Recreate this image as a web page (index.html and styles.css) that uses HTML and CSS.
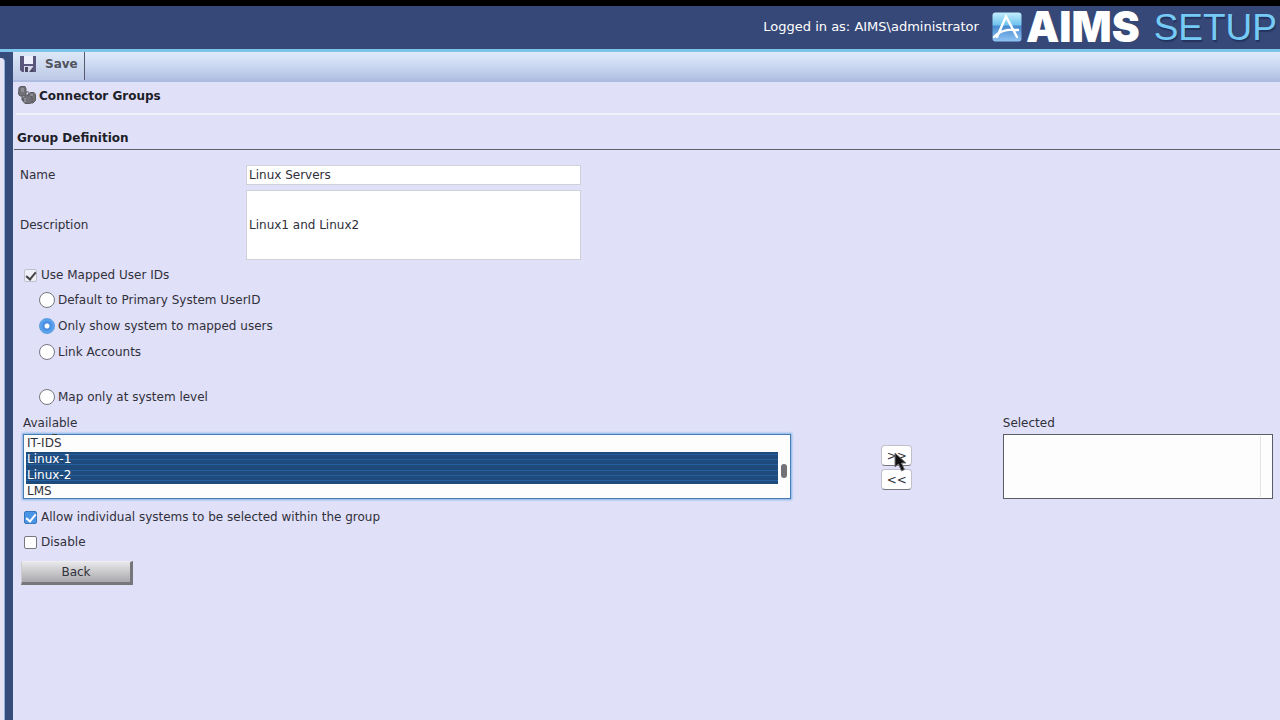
FILE: index.html
```html
<!DOCTYPE html>
<html lang="en">
<head>
<meta charset="utf-8">
<title>AIMS Setup</title>
<link rel="stylesheet" href="styles.css">
</head>
<body>
<header class="banner">
  <span class="login">Logged in as: AIMS\administrator</span>
  <svg class="logo" viewBox="0 0 30 30" aria-hidden="true">
    <defs><linearGradient id="lg" x1="0" y1="0" x2="0" y2="1"><stop offset="0" stop-color="#c3edfc"/><stop offset=".42" stop-color="#71c3ef"/><stop offset=".48" stop-color="#4a8ad0"/><stop offset="1" stop-color="#8fc5f5"/></linearGradient></defs>
    <rect x=".5" y=".5" width="29" height="29" rx="3" fill="url(#lg)"/>
    <path d="M5 25 L14 4.500 L25 25 M2 25 Q10 16 26 18" fill="none" stroke="#fff" stroke-width="2.400" stroke-linecap="round"/>
  </svg>
  <span class="brand">AIMS</span>
  <span class="product">SETUP</span>
</header>
<div class="shell">
  <aside class="rail"><div class="rail-panel"></div></aside>
  <main class="content">
    <div class="toolbar">
      <button class="save" type="button">
        <svg class="save-icon" viewBox="0 0 16 16" aria-hidden="true"><path d="M0 0h16v16H2l-2-2z" fill="#5a567c"/><path d="M4 0h9v8H4z" fill="#eef0fb"/><path d="M4 10h9v6H4z" fill="#d5d8e8"/><path d="M5 11h3v5H5zM9 16l4-5v5z" fill="#4b4865"/></svg>
        Save
      </button>
    </div>
    <h1 class="title">
      <svg class="group-icon" viewBox="0 0 18 19" aria-hidden="true"><g fill="#707076" stroke="#5a5a60"><path d="M1 1.500l2-1h4l1 2v6l-2 1.500H2L.5 8z"/><path d="M10.500 7.500l2-1H16l1.500 2v6L15 17H11l-1-2z"/><path d="M4 10v4h4M8 6h3M4 14l3 3.500h5l2-2V11l-3-2H8z"/></g><path d="M3 3h3M3 5h3M12 9h3M7 12v4" stroke="#a9a9b4" fill="none"/></svg>
      Connector Groups
    </h1>
    <h2 class="section">Group Definition</h2>
    <form class="form">
      <div class="field"><label for="name">Name</label><input class="text" id="name" value="Linux Servers"></div>
      <div class="field"><label for="desc">Description</label><input class="text tall" id="desc" value="Linux1 and Linux2"></div>
      <label class="check first"><input type="checkbox" class="box pale" checked>Use Mapped User IDs</label>
      <div class="radios">
        <label class="check"><input type="radio" class="dot" name="map">Default to Primary System UserID</label>
        <label class="check"><input type="radio" class="dot" name="map" checked>Only show system to mapped users</label>
        <label class="check"><input type="radio" class="dot" name="map">Link Accounts</label>
        <label class="check apart"><input type="radio" class="dot" name="map">Map only at system level</label>
      </div>
      <div class="lists">
        <div class="list-col">
          <label for="avail">Available</label>
          <div class="list-wrap">
            <select class="list active" id="avail" multiple size="4">
              <option>IT-IDS</option><option selected>Linux-1</option><option selected>Linux-2</option><option>LMS</option>
            </select>
          </div>
        </div>
        <div class="movers">
          <button class="move" type="button">&gt;&gt;</button>
          <button class="move" type="button">&lt;&lt;</button>
          <svg class="cursor" viewBox="0 0 14 20" aria-hidden="true"><path d="M1 1v14l3.500-3 3 7 3-1.500-3-6.500H12z" fill="#111" stroke="#777"/></svg>
        </div>
        <div class="list-col">
          <label for="chosen">Selected</label>
          <div class="chosen-wrap"><select class="list" id="chosen" multiple size="4"></select></div>
        </div>
      </div>
      <label class="check allow"><input type="checkbox" class="box blue" checked>Allow individual systems to be selected within the group</label>
      <label class="check"><input type="checkbox" class="box">Disable</label>
      <button class="back" type="button">Back</button>
    </form>
  </main>
</div>
</body>
</html>
```
FILE: styles.css
```css
* { box-sizing: border-box; }
body {
  margin: 0;
  min-height: 100vh;
  display: flex;
  flex-direction: column;
  background: #e0e0f8;
  color: #30303a;
  font: 12px/16px Verdana, "DejaVu Sans", sans-serif;
}
button, input, select { font: inherit; color: inherit; margin: 0; }
.banner {
  display: flex;
  align-items: center;
  justify-content: flex-end;
  height: 52px;
  padding: 0 3px 2px 0;
  border-top: 6px solid #000;
  border-bottom: 3px solid #7cc4ea;
  background: #364878;
  color: #fff;
}
.login { font-size: 13px; }
.logo { width: 30px; height: 30px; margin: 0 4px 0 13px; }
.brand { font: 900 42px/40px Inter, sans-serif; }
.product {
  margin-left: 14px;
  padding-top: 2px;
  font: 37px/40px "Liberation Sans", Arial, sans-serif;
  color: #76cbf6;
  text-shadow: 1px 2px 1px #24345f;
}
.shell { flex: 1; display: flex; }
.rail { width: 13px; padding-top: 6px; background: #364d7c; display: flex; }
.rail-panel {
  width: 5px;
  background: #e4e4f4;
  border-right: 1px solid #8eb4dc;
  border-top-right-radius: 4px;
}
.content { flex: 1; min-width: 0; }
.toolbar {
  height: 30px;
  background: linear-gradient(#dfeafb, #ccd8f2 45%, #acbadf);
}
.save {
  display: flex;
  align-items: center;
  gap: 9px;
  height: 28px;
  padding: 0 6px 4px 7px;
  border: 0;
  border-right: 1px solid #555b70;
  background: linear-gradient(#dde8f8, #bdc9e6);
  font-weight: bold;
  color: #50545e;
}
.save-icon { width: 16px; height: 16px; }
.title {
  display: flex;
  align-items: center;
  gap: 3px;
  height: 33px;
  margin: 0 0 0 3px;
  padding: 0 2px 4px;
  border-bottom: 2px solid #f0f0f8;
  font-size: 12px;
  color: #202028;
}
.group-icon { width: 18px; height: 19px; }
.section {
  margin: 0 0 0 1px;
  padding: 15px 3px 3px;
  border-bottom: 1px solid #606068;
  font-size: 12px;
  color: #202028;
}
.form {
  display: flex;
  flex-direction: column;
  align-items: flex-start;
  padding: 15px 7px 0;
}
.field { display: grid; grid-template-columns: 226px 335px; align-items: center; margin-bottom: 5px; }
.text {
  width: 100%;
  height: 20px;
  padding: 0 2px;
  border: 1px solid #d0d0d8;
  background: #fff;
  outline: 0;
}
.tall { height: 70px; }
.check { display: flex; align-items: center; gap: 4px; height: 16px; margin: 0 0 9px 4px; }
.first { margin-top: 2px; }
.box {
  appearance: none;
  display: grid;
  place-items: center;
  width: 13px;
  height: 13px;
  border: 1px solid #77777f;
  border-radius: 2px;
  background: #fff;
}
.box:checked::before {
  content: "";
  width: 4px;
  height: 8px;
  border: solid #444;
  border-width: 0 2px 2px 0;
  transform: rotate(40deg);
}
.pale { border-color: #c0c0cc; background: #f0f0f8; }
.blue { border-color: #3877be; background: #4a94e6; }
.blue:checked::before { border-color: #fff; }
.radios { margin-left: 19px; }
.radios .check { gap: 3px; margin: 0 0 10px; }
.radios .apart { margin-top: 29px; }
.dot {
  appearance: none;
  width: 16px;
  height: 16px;
  border: 1px solid #77777f;
  border-radius: 50%;
  background: #fff;
}
.dot:checked {
  border-color: #5a9ce0;
  background: radial-gradient(circle, #fff 0 2px, #4a8ee0 3px 4px, #5ba4ee 6px);
}
.lists {
  width: 100%;
  display: grid;
  grid-template-columns: 767fr 212fr 270fr;
  padding-left: 3px;
}
.list-wrap, .chosen-wrap { position: relative; margin-top: 3px; }
.list {
  display: block;
  width: 100%;
  height: 65px;
  padding: 1px 12px 0 2px;
  border: 1px solid #5c5c64;
  border-radius: 0;
  background: #fdfdfd;
  overflow: hidden;
  scrollbar-width: none;
  outline: 0;
}
.active { border-color: #4a7cb0; box-shadow: 0 0 2px 1px #80b4e8; }
.list option { height: 16px; min-height: 16px; padding: 0 1px; line-height: 16px; }
.list option:checked {
  background: repeating-linear-gradient(#1f4b7c 0 2px, #2460a0 2px 3px, #1f4b7c 3px 5px);
  color: #fff;
  -webkit-text-fill-color: #fff;
}
.list-wrap::after {
  content: "";
  position: absolute;
  top: 30px;
  right: 4px;
  width: 6px;
  height: 14px;
  border-radius: 3px;
  background: #727276;
}
.list-wrap::before {
  content: "";
  position: absolute;
  top: 0;
  left: 29px;
  width: 5px;
  height: 1px;
  background: #444;
}
.chosen-wrap::after {
  content: "";
  position: absolute;
  top: 2px;
  bottom: 2px;
  right: 12px;
  width: 1px;
  background: #e4e4e8;
}
.movers {
  position: relative;
  display: flex;
  flex-direction: column;
  align-items: center;
  gap: 3px;
  padding-top: 30px;
}
.move {
  width: 31px;
  height: 21px;
  padding: 0;
  border: 1px solid #c0c0c8;
  border-bottom-color: #77777f;
  border-radius: 4px;
  background: #fff;
}
.cursor { position: absolute; top: 37px; left: calc(50% - 3px); width: 14px; height: 20px; }
.allow { margin-top: 10px; }
.back {
  width: 112px;
  height: 24px;
  margin-top: 2px;
  margin-left: 1px;
  padding: 0;
  border: solid;
  border-width: 1px 3px 3px 1px;
  border-color: #eee #77777b #77777b #ccc;
  background: linear-gradient(#e8e8ea, #a9a9ad);
}
```
